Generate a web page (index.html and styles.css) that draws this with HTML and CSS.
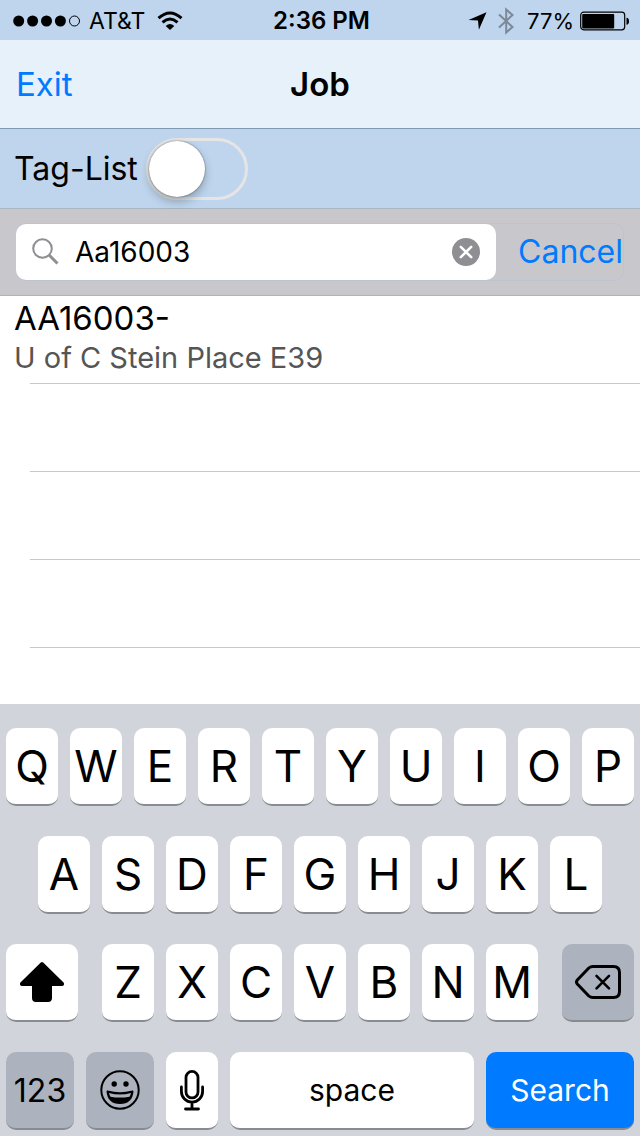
FILE: index.html
```
<!DOCTYPE html>
<html lang="en">
<head>
<meta charset="utf-8">
<meta name="viewport" content="width=device-width, initial-scale=1">
<title>Job</title>
<link rel="stylesheet" href="styles.css">
</head>
<body>
<div class="screen">
  <div class="status">
    <div class="status-side">
      <svg class="signal" width="68" height="14" viewBox="0 0 68 14" aria-hidden="true"><circle cx="5.700" cy="7" r="5.500"/><circle cx="19.600" cy="7" r="5.500"/><circle cx="33.500" cy="7" r="5.500"/><circle cx="47.400" cy="7" r="5.500"/><circle cx="61.500" cy="7" r="5" fill="none" stroke="#000"/></svg>
      <span>AT&amp;T</span>
      <svg class="wifi" width="26" height="20" viewBox="0 0 26 20" aria-hidden="true"><path d="M1.500 7.200Q13-3.200 24.500 7.200" fill="none" stroke="#000" stroke-width="3"/><path d="M5.500 11.300Q13 4.800 20.500 11.300" fill="none" stroke="#000" stroke-width="3"/><path d="M8.700 15Q13 11 17.300 15L13 19Z"/></svg>
    </div>
    <span class="clock">2:36 PM</span>
    <div class="status-side status-right">
      <svg width="19" height="18" viewBox="0 0 19 18" aria-hidden="true"><path d="M18.500.300L10.900 17.800L10 8.500L.500 7.900Z"/></svg>
      <svg class="bluetooth" width="18" height="28" viewBox="0 0 18 28" aria-hidden="true"><path d="M2 7.500L15.500 20L9.200 25.500V2.500L15.500 8L2 20.500" fill="none" stroke="#7b8998" stroke-width="2"/></svg>
      <span class="percent">77%</span>
      <svg class="battery" width="50" height="20" viewBox="0 0 50 20" aria-hidden="true"><rect x=".700" y="1.200" width="44" height="17.600" rx="3" fill="none" stroke="#000" stroke-width="1.200"/><rect x="2.200" y="3" width="32" height="14.500" rx="1"/><path d="M46.500 6.800Q49 7.200 49 10.300T46.500 13.800Z"/></svg>
    </div>
  </div>

  <header class="nav">
    <a class="nav-link" href="#">Exit</a>
    <h1 class="title">Job</h1>
  </header>

  <div class="tag-row">
    <label for="tag">Tag-List</label>
    <input class="switch" id="tag" type="checkbox" role="switch">
  </div>

  <form class="search" role="search">
    <div class="search-frame">
      <div class="field">
        <svg width="28" height="28" viewBox="0 0 28 28" aria-hidden="true"><g fill="none" stroke="#8e8e93"><circle cx="10.500" cy="10.500" r="9.300" stroke-width="2"/><path d="M17.300 17.300L25.500 25.500" stroke-width="3"/></g></svg>
        <input class="query" type="text" value="Aa16003" aria-label="Search jobs">
        <button class="clear" type="button" aria-label="Clear text"><svg width="28" height="28" viewBox="0 0 28 28"><circle cx="14" cy="14" r="14" fill="#8e8e93"/><path d="M8.800 8.800L19.200 19.200M19.200 8.800L8.800 19.200" stroke="#fff" stroke-width="2.600" stroke-linecap="round"/></svg></button>
      </div>
      <button class="cancel" type="button">Cancel</button>
    </div>
  </form>

  <ul class="list">
    <li class="item"><div class="item-title">AA16003-</div><div class="item-sub">U of C Stein Place E39</div></li>
    <li class="item"></li>
    <li class="item"></li>
    <li class="item"></li>
  </ul>

  <div class="keyboard">
    <div class="keys">
      <button class="key">Q</button><button class="key">W</button><button class="key">E</button><button class="key">R</button><button class="key">T</button><button class="key">Y</button><button class="key">U</button><button class="key">I</button><button class="key">O</button><button class="key">P</button>
    </div>
    <div class="keys keys-inset">
      <button class="key">A</button><button class="key">S</button><button class="key">D</button><button class="key">F</button><button class="key">G</button><button class="key">H</button><button class="key">J</button><button class="key">K</button><button class="key">L</button>
    </div>
    <div class="keys keys-third">
      <button class="key" aria-label="Shift"><svg width="44" height="40" viewBox="0 0 44 40"><path d="M20.800.600Q22-.500 23.200.600L43.300 20.200Q44.500 21.500 43.800 23Q43.400 24 42 24H32V36Q32 40 28 40H16Q12 40 12 36V24H2Q.600 24 .200 23Q-.500 21.500 .700 20.200Z"/></svg></button>
      <div class="keys keys-letters">
        <button class="key">Z</button><button class="key">X</button><button class="key">C</button><button class="key">V</button><button class="key">B</button><button class="key">N</button><button class="key">M</button>
      </div>
      <button class="key key-dark" aria-label="Delete"><svg width="46" height="34" viewBox="0 0 46 34"><g fill="none" stroke="#000" stroke-width="3" stroke-linecap="round" stroke-linejoin="round"><path d="M18 1.500H38.500Q44.500 1.500 44.500 7.500V26.500Q44.500 32.500 38.500 32.500H18Q15.500 32.500 13.800 31L2.300 19Q.700 17 2.300 15L13.800 3Q15.500 1.500 18 1.500Z"/><path d="M21.500 10.800L34 23.300M34 10.800L21.500 23.300" stroke-width="2.600"/></g></svg></button>
    </div>
    <div class="keys keys-bottom">
      <button class="key key-dark key-number">123</button>
      <button class="key key-dark" aria-label="Emoji"><svg width="40" height="40" viewBox="0 0 40 40"><circle cx="20" cy="20" r="18.700" fill="none" stroke="#000" stroke-width="2"/><circle cx="14.200" cy="14" r="2.700"/><circle cx="26" cy="14" r="2.700"/><path d="M7.500 21.500Q20 25 32.500 21.500Q31.500 33 20 33T7.500 21.500Z" fill="#000" stroke="#000" stroke-width="2" stroke-linejoin="round"/><path d="M9 23Q20 26 31 23Q30.500 25 29.500 26.700Q20 28.500 10.500 26.700Q9.500 25 9 23Z" fill="#acb3be"/></svg></button>
      <button class="key" aria-label="Dictation"><svg width="26" height="42" viewBox="0 0 26 42"><g fill="none" stroke="#000" stroke-width="2.800" stroke-linecap="round"><rect x="7" y="2.400" width="12" height="26.500" rx="6"/><path d="M2.400 18V22.500A10.600 10.600 0 0 0 23.600 22.500V18M13 33.500V40M6.500 40H19.500"/></g></svg></button>
      <button class="key key-word">space</button>
      <button class="key key-word key-search">Search</button>
    </div>
  </div>
</div>
</body>
</html>
```
FILE: styles.css
```
* { box-sizing: border-box; }

body {
  margin: 0;
  background: #fff;
  color: #000;
  font-family: Inter, "Liberation Sans", sans-serif;
}

button {
  padding: 0;
  border: 0;
  background: none;
  color: inherit;
  font: inherit;
}

svg { display: block; flex: none; }

.screen {
  display: flex;
  flex-direction: column;
  min-height: 100vh;
}

/* Status bar */
.status {
  display: grid;
  grid-template-columns: 1fr auto 1fr;
  align-items: center;
  height: 40px;
  padding: 0 10px 0 13px;
  background: #bed5ed;
  font-size: 23px;
  line-height: 42px;
}

.status-side { display: flex; align-items: center; }
.signal { margin-right: 8px; }
.wifi { margin-left: 12px; }
.clock { font-size: 24px; font-weight: 600; }
.status-right { justify-content: flex-end; }
.bluetooth { margin: 0 12px 0 10px; }
.battery { margin-left: 6px; }
.percent { font-size: 22px; }

/* Navigation bar */
.nav {
  display: grid;
  grid-template-columns: 1fr auto 1fr;
  align-items: center;
  height: 89px;
  padding: 0 16px;
  border-bottom: 1px solid #7f99b3;
  background: #e7f1fa;
  font-size: 33px;
}

.nav-link { color: #007aff; text-decoration: none; }
.title { margin: 0; font-size: 33px; font-weight: 600; }

/* Tag switch */
.tag-row {
  display: flex;
  align-items: center;
  gap: 8px;
  height: 80px;
  padding: 0 14px;
  border-bottom: 1px solid #aab5c2;
  background: #bed5ed;
  font-size: 32px;
}

.switch {
  appearance: none;
  width: 102px;
  height: 62px;
  margin: 0;
  border: 3px solid #e5e5e5;
  border-radius: 31px;
}

.switch::before {
  content: "";
  display: block;
  width: 56px;
  height: 56px;
  border-radius: 50%;
  background: #fff;
  box-shadow: 0 0 2px rgba(0, 0, 0, .5), 0 5px 10px rgba(0, 0, 0, .25);
}

.switch:checked::before { margin-left: auto; }

/* Search bar */
.search {
  padding: 14px 16px;
  border-bottom: 1px solid #b2b2b6;
  background: #c8c7cc;
}

.search-frame {
  display: flex;
  height: 58px;
  border: 1px solid #bfc3d0;
  border-width: 1px 1px 1px 0;
  border-radius: 10px;
}

.field {
  display: flex;
  flex: 1;
  align-items: center;
  min-width: 0;
  padding: 0 16px;
  border-radius: 10px;
  background: #fff;
}

.query {
  flex: 1;
  min-width: 0;
  padding: 0 0 0 15px;
  border: 0;
  outline: 0;
  background: none;
  color: #000;
  font: 28px Inter, "Liberation Sans", sans-serif;
}

.cancel {
  padding: 0 0 2px 22px;
  color: #007aff;
  font-size: 32px;
}

/* Results */
.list {
  flex: 1;
  margin: 0;
  padding: 0;
  list-style: none;
}

.item {
  height: 88px;
  padding-left: 14px;
  background: linear-gradient(#c8c7cc, #c8c7cc) 30px 100% / 100% 1px no-repeat;
}

.item-title { font-size: 33px; line-height: 44px; }
.item-sub { color: #555; font-size: 29px; line-height: 36px; }

/* Keyboard */
.keyboard {
  display: grid;
  gap: 30px;
  padding: 24px 6px 6px;
  background: #d1d5db;
}

.keys { display: flex; gap: 12px; }
.keys-inset { padding: 0 32px; }
.keys-third { display: grid; grid-template-columns: 72fr 436fr 72fr; gap: 24px; }
.keys-bottom { display: grid; grid-template-columns: 68fr 68fr 52fr 244fr 148fr; }

.key {
  display: flex;
  flex: 1;
  align-items: center;
  justify-content: center;
  min-width: 0;
  height: 78px;
  border-bottom: 2px solid #888b8f;
  border-radius: 10px;
  background: #fff;
  font-size: 44px;
}

.key-dark { background: #acb3be; }
.key-number { font-size: 32px; }
.key-word { font-size: 30px; }
.key-search { background: #007aff; color: #fff; }
```
